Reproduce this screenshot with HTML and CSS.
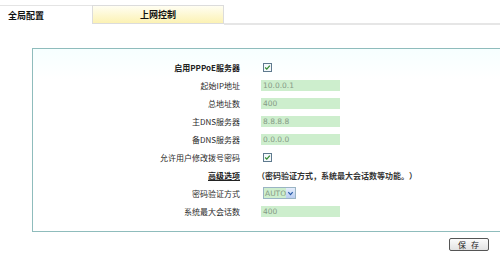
FILE: index.html
```html
<!DOCTYPE html>
<html>
<head>
<meta charset="utf-8">
<link rel="stylesheet" href="styles.css">
</head>
<body>
<div class="tabs">
  <div class="tab tab-active">全局配置</div>
  <div class="tab tab-other">上网控制</div>
  <div class="tab-fill"></div>
</div>
<div class="panel">
  <div class="form">
    <div class="label strong">启用PPPoE服务器</div>
    <div class="value"><span class="check"><svg viewBox="0 0 9 9" width="7" height="7"><path d="M1.5 4.5 L3.6 6.6 L7.5 2.2" fill="none" stroke="#2f8a2f" stroke-width="1.6"/></svg></span></div>

    <div class="label">起始IP地址</div>
    <div class="value"><span class="input">10.0.0.1</span></div>

    <div class="label">总地址数</div>
    <div class="value"><span class="input">400</span></div>

    <div class="label">主DNS服务器</div>
    <div class="value"><span class="input">8.8.8.8</span></div>

    <div class="label">备DNS服务器</div>
    <div class="value"><span class="input">0.0.0.0</span></div>

    <div class="label">允许用户修改拨号密码</div>
    <div class="value"><span class="check"><svg viewBox="0 0 9 9" width="7" height="7"><path d="M1.5 4.5 L3.6 6.6 L7.5 2.2" fill="none" stroke="#2f8a2f" stroke-width="1.6"/></svg></span></div>

    <div class="label"><span class="adv">高级选项</span></div>
    <div class="value desc">（密码验证方式，系统最大会话数等功能。）</div>

    <div class="label">密码验证方式</div>
    <div class="value"><span class="select"><span class="sel-text">AUTO</span><span class="sel-btn"><svg viewBox="0 0 8 8" width="7" height="7"><path d="M1.5 2.5 L4 5.2 L6.5 2.5" fill="none" stroke="#2a5ca8" stroke-width="1.4"/></svg></span></span></div>

    <div class="label">系统最大会话数</div>
    <div class="value"><span class="input">400</span></div>
  </div>
</div>
<div class="actions">
  <button class="btn">保 存</button>
</div>
</body>
</html>
```
FILE: styles.css
```css
html, body {
  margin: 0;
  padding: 0;
  background: #ffffff;
  overflow: hidden;
  width: 500px;
  height: 254px;
  font-family: "Noto Sans CJK SC", "DejaVu Sans", sans-serif;
  color: #333;
}

.tabs {
  display: flex;
  margin-top: 5px;
  height: 20px;
}

.tab {
  height: 19px;
  font-size: 9px;
  font-weight: bold;
  color: #111;
  display: flex;
  align-items: center;
  box-sizing: border-box;
}

.tab-active {
  width: 92px;
  border-top: 1px solid #e4e4e4;
  padding-left: 8px;
  background: #fff;
}

.tab-other {
  width: 132px;
  border: 1px solid #dcdcdc;
  justify-content: center;
  background: linear-gradient(#fffef2, #fcf2b4);
}

.tab-fill {
  flex: 1;
  height: 20px;
  border-bottom: 2px solid #e6e6e6;
  box-sizing: border-box;
}

.panel {
  margin-top: 23px;
  margin-left: 32px;
  border-top: 1px solid #8fbcbc;
  border-left: 1px solid #8fbcbc;
  border-bottom: 1px solid #8fbcbc;
  background: linear-gradient(#f6ffff, #ffffff 30px);
  padding: 9px 0 11px 0;
  height: 162px;
}

.form {
  display: grid;
  grid-template-columns: 207px 1fr;
  column-gap: 21px;
  grid-auto-rows: 18px;
  font-size: 8px;
}

.label {
  text-align: right;
  display: flex;
  align-items: center;
  justify-content: flex-end;
  color: #2a2a2a;
}

.strong {
  font-weight: bold;
  color: #222;
}

.adv {
  font-weight: bold;
  text-decoration: underline;
  color: #222;
}

.value {
  display: flex;
  align-items: center;
}

.desc {
  font-weight: bold;
  color: #333;
  margin-left: -4px;
}

.check {
  width: 9px;
  height: 9px;
  border: 1px solid #5f7a8e;
  background: #f4f8fa;
  box-sizing: border-box;
  display: flex;
  align-items: center;
  justify-content: center;
  margin-left: 2px;
}

.input {
  width: 79px;
  height: 11px;
  background: #cdeecd;
  color: #869a86;
  font-family: "DejaVu Sans", sans-serif;
  font-size: 7.5px;
  line-height: 11px;
  padding-left: 2px;
  box-sizing: border-box;
}

.select {
  width: 33px;
  height: 12px;
  margin-left: 2px;
  border: 1px solid #9ab4c4;
  background: #cdeecd;
  box-sizing: border-box;
  display: flex;
  align-items: center;
}

.sel-text {
  flex: 1;
  color: #869a86;
  font-family: "DejaVu Sans", sans-serif;
  font-size: 7.5px;
  padding-left: 1px;
}

.sel-btn {
  width: 11px;
  height: 10px;
  background: linear-gradient(#e6eefc, #b9cdf0);
  display: flex;
  align-items: center;
  justify-content: center;
}

.actions {
  display: flex;
  justify-content: flex-end;
  padding: 6px 11px 0 0;
}

.btn {
  width: 40px;
  height: 13px;
  padding: 0;
  border: 1px solid #555;
  border-radius: 2px;
  background: linear-gradient(#fbfbfb, #e2e2e2);
  font-family: "Noto Sans CJK SC", sans-serif;
  font-size: 8px;
  letter-spacing: 1px;
  word-spacing: 1px;
  color: #222;
  line-height: 11px;
}
```
